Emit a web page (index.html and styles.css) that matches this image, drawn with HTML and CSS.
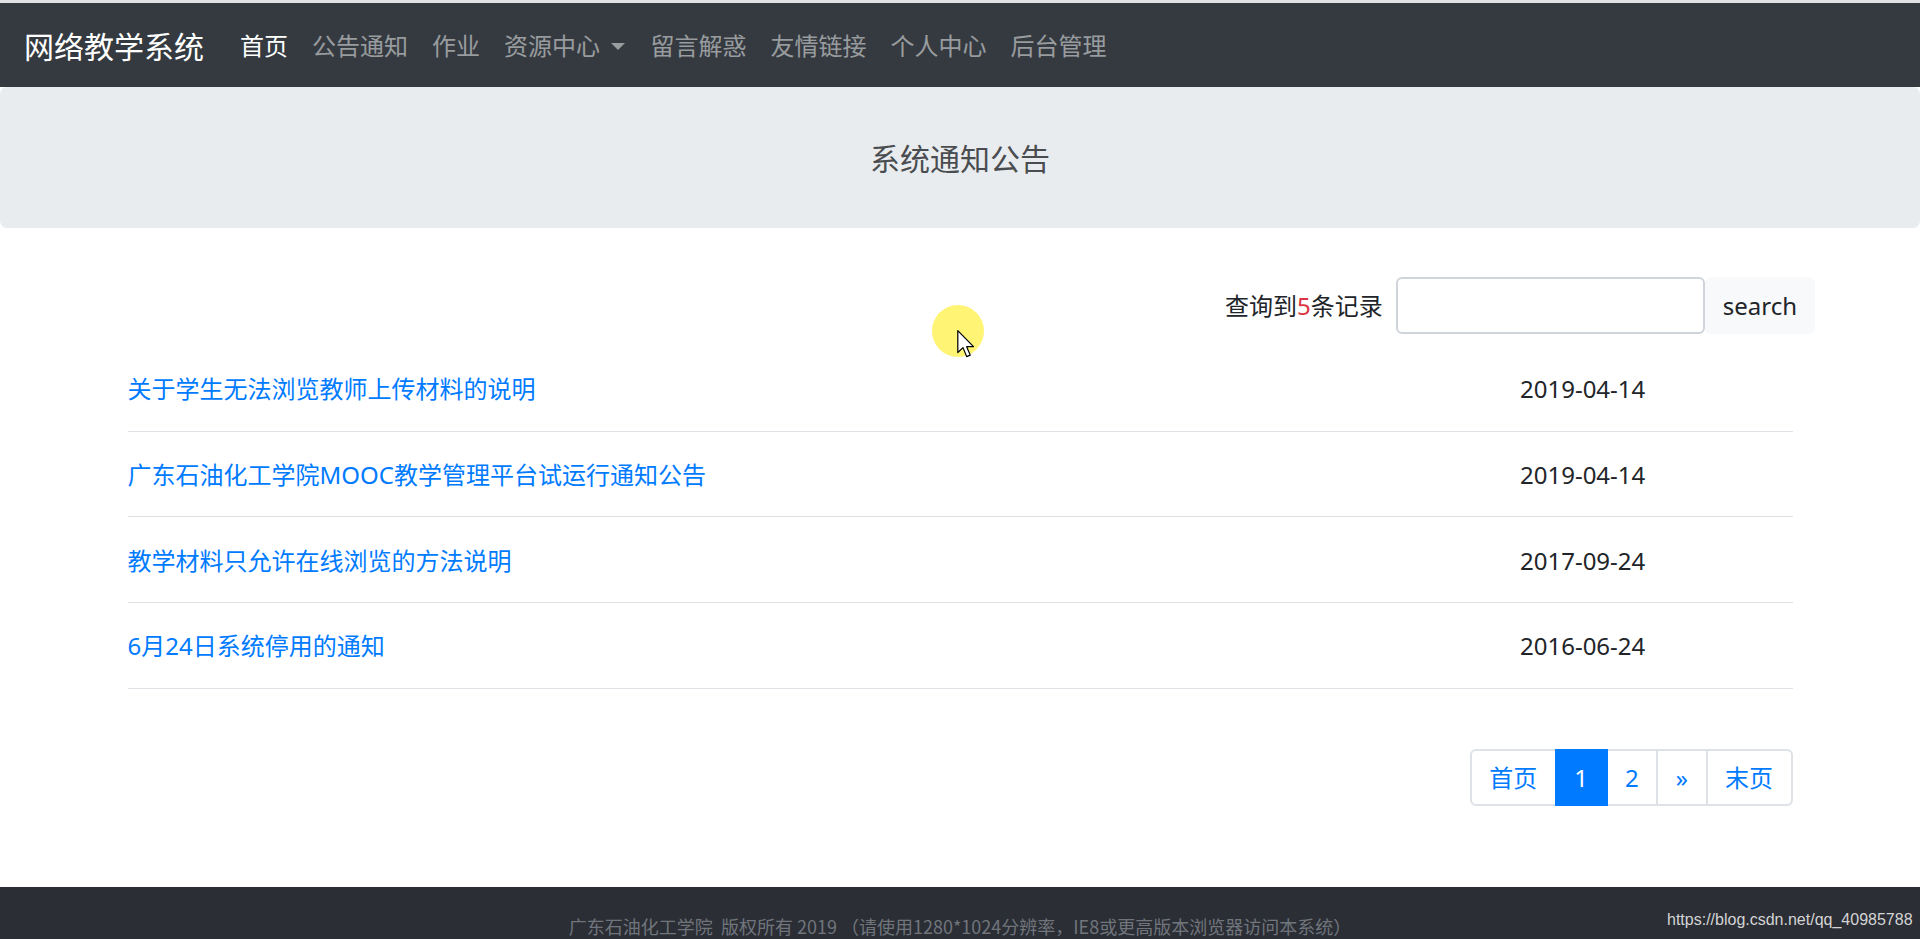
FILE: index.html
```html
<!DOCTYPE html>
<html lang="zh-CN">
<head>
<meta charset="utf-8">
<title>系统通知公告 - 网络教学系统</title>
<link rel="stylesheet" href="styles.css">
</head>
<body>
<div class="topline"></div>
<nav class="navbar">
  <a class="brand" href="#">网络教学系统</a>
  <ul class="nav">
    <li><a class="nav-link active" href="#">首页</a></li>
    <li><a class="nav-link" href="#">公告通知</a></li>
    <li><a class="nav-link" href="#">作业</a></li>
    <li><a class="nav-link" href="#">资源中心 <span class="caret"></span></a></li>
    <li><a class="nav-link" href="#">留言解惑</a></li>
    <li><a class="nav-link" href="#">友情链接</a></li>
    <li><a class="nav-link" href="#">个人中心</a></li>
    <li><a class="nav-link" href="#">后台管理</a></li>
  </ul>
</nav>

<header class="jumbotron">
  <h5 class="jumbo-title">系统通知公告</h5>
</header>

<main class="container">
  <form class="search">
    <span class="count">查询到<span class="num">5</span>条记录</span>
    <input class="search-input" type="text">
    <button class="search-btn" type="button">search</button>
  </form>

  <ul class="notice-list">
    <li class="notice"><a class="notice-title" href="#">关于学生无法浏览教师上传材料的说明</a><span class="notice-date">2019-04-14</span></li>
    <li class="notice"><a class="notice-title" href="#">广东石油化工学院MOOC教学管理平台试运行通知公告</a><span class="notice-date">2019-04-14</span></li>
    <li class="notice"><a class="notice-title" href="#">教学材料只允许在线浏览的方法说明</a><span class="notice-date">2017-09-24</span></li>
    <li class="notice"><a class="notice-title" href="#">6月24日系统停用的通知</a><span class="notice-date">2016-06-24</span></li>
  </ul>

  <nav class="pager">
    <ul class="pagination">
      <li><a class="page-link first" href="#">首页</a></li>
      <li><a class="page-link current" href="#">1</a></li>
      <li><a class="page-link" href="#">2</a></li>
      <li><a class="page-link" href="#">»</a></li>
      <li><a class="page-link last" href="#">末页</a></li>
    </ul>
  </nav>
</main>

<footer class="footer">
  <p class="footer-text">广东石油化工学院&nbsp; 版权所有 2019 （请使用1280*1024分辨率，IE8或更高版本浏览器访问本系统）</p>
</footer>

<div class="watermark">https://blog.csdn.net/qq_40985788</div>
<div class="halo"></div>
<svg class="cursor" width="18" height="28" viewBox="0 0 13 20.5">
  <path d="M0.5 0.5 L0.5 16.5 L4.3 12.9 L7 19.5 L9.6 18.4 L7 12.2 L12 12.2 Z" fill="#fff" stroke="#000" stroke-width="0.9" stroke-linejoin="round"/>
</svg>
</body>
</html>
```

FILE: styles.css
```css
* {
  box-sizing: border-box;
}

html, body {
  margin: 0;
  padding: 0;
}

body {
  font-family: "Noto Sans", "Noto Sans CJK SC", sans-serif;
  font-size: 24px;
  line-height: 1.5;
  color: #212529;
  background: #fff;
  position: relative;
}

a {
  text-decoration: none;
}

.topline {
  height: 3px;
  background: #dfe1e3;
}

.navbar {
  display: flex;
  align-items: center;
  height: 84px;
  padding: 0 24px;
  background: #343a40;
}

.brand {
  font-size: 30px;
  line-height: 45px;
  color: #fff;
  margin-right: 24px;
  font-family: "Noto Sans CJK SC", sans-serif;
}

.nav {
  display: flex;
  list-style: none;
  margin: 0;
  padding: 0;
}

.nav-link {
  display: block;
  padding: 6px 12px;
  font-size: 24px;
  line-height: 36px;
  color: rgba(255, 255, 255, 0.5);
  font-family: "Noto Sans CJK SC", sans-serif;
}

.nav-link.active {
  color: #fff;
}

.caret {
  display: inline-block;
  width: 0;
  height: 0;
  margin-left: 6px;
  margin-right: 1px;
  vertical-align: 5px;
  border-top: 7px solid;
  border-left: 7px solid transparent;
  border-right: 7px solid transparent;
}

.jumbotron {
  background: #e9ecef;
  border-radius: 7px;
  padding: 52px 24px 53px;
  margin-bottom: 49px;
}

.jumbo-title {
  margin: 0;
  font-size: 30px;
  line-height: 36px;
  font-weight: 400;
  text-align: center;
  color: #4a4d50;
  font-family: "Noto Sans CJK SC", sans-serif;
}

.container {
  max-width: 1710px;
  margin: 0 auto;
  padding: 0 22.5px;
}

.search {
  display: flex;
  justify-content: flex-end;
  align-items: center;
  margin-right: -22.5px;
  height: 57px;
}

.count {
  margin-right: 13px;
  font-size: 24px;
  color: #212529;
}

.num {
  color: #dc3545;
}

.search-input {
  width: 309px;
  height: 57px;
  border: 2px solid #ced4da;
  border-radius: 6px;
  background: #fff;
  font-size: 24px;
  padding: 0 18px;
  outline: none;
}

.search-btn {
  height: 57px;
  padding: 0 18px;
  border: none;
  border-radius: 6px;
  background: #f8f9fa;
  color: #212529;
  font-family: "Noto Sans", sans-serif;
  font-size: 24px;
}

.notice-list {
  list-style: none;
  margin: 12px 0 0;
  padding: 0;
}

.notice {
  display: flex;
  align-items: center;
  height: 85.7px;
  padding-top: 2px;
  border-bottom: 1.5px solid #dee2e6;
}

.notice-title {
  flex: 1;
  color: #007bff;
  font-size: 24px;
}

.notice-date {
  width: 272.5px;
  color: #212529;
  font-size: 24px;
}

.pager {
  display: flex;
  justify-content: flex-end;
  margin-top: 60px;
  margin-bottom: 81px;
}

.pagination {
  display: flex;
  list-style: none;
  margin: 0;
  padding: 0;
}

.page-link {
  display: block;
  height: 57px;
  padding: 0 17.5px;
  margin-left: -2px;
  line-height: 53px;
  font-size: 24px;
  color: #007bff;
  background: #fff;
  border: 2px solid #dee2e6;
  font-family: "Noto Sans", "Noto Sans CJK SC", sans-serif;
}

.page-link.first {
  margin-left: 0;
  border-radius: 6px 0 0 6px;
}

.page-link.last {
  border-radius: 0 6px 6px 0;
}

.page-link.current {
  position: relative;
  z-index: 1;
  color: #fff;
  background: #007bff;
  border-color: #007bff;
}

.footer {
  background: #2b2e35;
  padding: 26px 0 40px;
}

.footer-text {
  margin: 0;
  text-align: center;
  font-size: 18px;
  line-height: 27px;
  color: #70757c;
  font-family: "Noto Sans CJK SC", sans-serif;
}

.watermark {
  position: absolute;
  top: 909px;
  left: 1667px;
  font-family: "Liberation Sans", Arial, sans-serif;
  font-size: 16px;
  line-height: 22px;
  color: #d4d4d4;
  white-space: nowrap;
}

.halo {
  position: absolute;
  left: 932px;
  top: 305px;
  width: 52px;
  height: 52px;
  border-radius: 50%;
  background: #fff36d;
  opacity: 0.95;
}

.cursor {
  position: absolute;
  left: 957px;
  top: 330px;
}
```
